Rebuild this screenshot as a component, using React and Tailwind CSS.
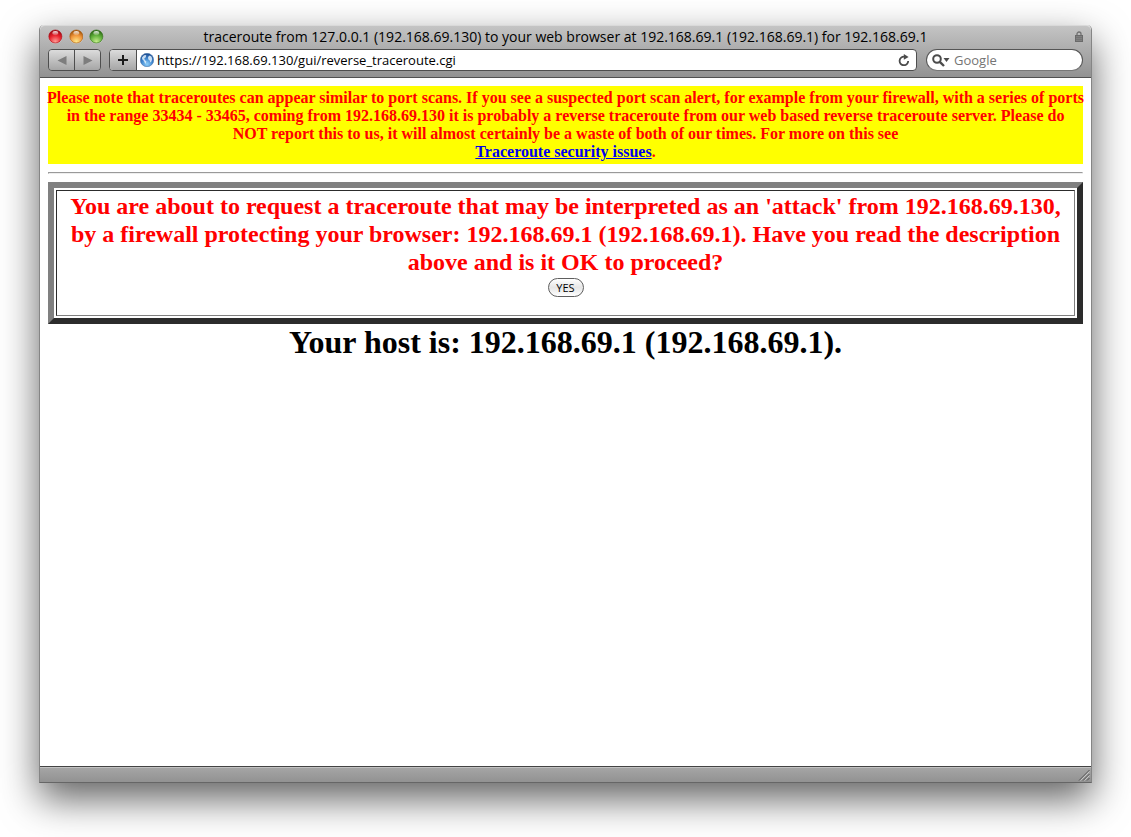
import React from "react";

const lights = [
  { name: "Close", id: "red", dark: "#a30a14", mid: "#e8222c", low: "#ff9a94" },
  { name: "Minimize", id: "amber", dark: "#a5570c", mid: "#f0953a", low: "#ffe98a" },
  { name: "Zoom", id: "green", dark: "#2f6b17", mid: "#5fae3a", low: "#c5ee8c" },
];

function Light({ name, id, dark, mid, low }) {
  return (
    <button aria-label={name} className="size-[15px]">
      <svg viewBox="0 0 15 15" className="block size-full">
        <defs>
          <radialGradient id={id} cx="50%" cy="88%" r="80%">
            <stop offset="0" stopColor={low} />
            <stop offset="0.6" stopColor={mid} />
            <stop offset="1" stopColor={dark} />
          </radialGradient>
          <linearGradient id={id + "-shine"} x1="0" y1="0" x2="0" y2="1">
            <stop offset="0" stopColor="#fff" stopOpacity="0.9" />
            <stop offset="1" stopColor="#fff" stopOpacity="0.15" />
          </linearGradient>
        </defs>
        <circle cx="7.5" cy="8" r="7" fill="#d8d8d8" />
        <circle cx="7.5" cy="7.5" r="6.7" fill={`url(#${id})`} stroke={dark} strokeWidth="0.6" />
        <ellipse cx="7.5" cy="4" rx="3" ry="2.2" fill={`url(#${id}-shine)`} />
      </svg>
    </button>
  );
}

function Globe() {
  return (
    <svg viewBox="0 0 14 14" className="size-[14px] shrink-0">
      <defs>
        <radialGradient id="globe" cx="50%" cy="80%" r="75%">
          <stop offset="0" stopColor="#8fd0fb" />
          <stop offset="0.55" stopColor="#3f86cf" />
          <stop offset="1" stopColor="#1d4d93" />
        </radialGradient>
      </defs>
      <circle cx="7" cy="7" r="6.7" fill="url(#globe)" stroke="#4b78ad" strokeWidth="0.6" />
      <path d="M2 4.4 4 2.2 6.2 2 6 3.6 5.4 4.8 4.2 5.6 5 7.2 6.4 8.6 5.6 11 4.6 9.6 3.6 7.4 2.2 6.2Z" fill="#e3f1fb" opacity="0.85" />
      <path d="M8.4 3.4 9.8 2.4 11.6 3.8 12.2 6 11.4 8.6 10.2 9.6 9.8 7.6 8.6 6.8 8 5Z" fill="#e3f1fb" opacity="0.85" />
    </svg>
  );
}

const toolButton =
  "flex items-center justify-center border-[#4e4e4e] bg-linear-to-b from-[#dcdcdc] to-[#a6a6a6]";

export default function App() {
  return (
    <div className="flex min-h-screen flex-col bg-white px-[39px] pt-[25px] pb-[54px] font-['Liberation_Serif',serif] text-black">
      <div className="flex flex-1 flex-col rounded-t-[5px] border-x border-b border-x-[#858585] border-b-[#666] bg-white shadow-[0_16px_38px_rgba(0,0,0,0.62)]">
        <header className="rounded-t-[5px] border-t border-b border-t-[#d9d9d9] border-b-[#515151] bg-linear-to-b from-[#c4c4c4] to-[#929292] px-2 font-['Open_Sans','Noto_Sans',sans-serif]">
          <div className="flex h-[21px] items-center">
            <div className="flex w-14 shrink-0 gap-1.5">
              {lights.map((l) => (
                <Light key={l.id} {...l} />
              ))}
            </div>
            <h1 className="min-w-0 flex-1 text-center text-[14px] leading-[18px] whitespace-nowrap">
              traceroute from 127.0.0.1 (192.168.69.130) to your web browser at 192.168.69.1 (192.168.69.1) for 192.168.69.1
            </h1>
            <div className="flex w-14 shrink-0 justify-end">
              <svg viewBox="0 0 8 11" className="h-[11px] w-2">
                <path d="M2 5V3a2 2 0 0 1 4 0v2" fill="none" stroke="#717171" strokeWidth="1.3" />
                <rect x="0.5" y="4.5" width="7" height="6" fill="#808080" stroke="#6a6a6a" />
                <path d="M1 6.5h6M1 8.5h6" stroke="#6f6f6f" strokeWidth="0.7" />
              </svg>
            </div>
          </div>
          <div className="flex h-[30px] items-start pt-0.5">
            <div className="flex h-[22px] w-[53px] shrink-0 overflow-hidden rounded-[4px] border border-[#4e4e4e]">
              <button aria-label="Back" className={toolButton + " w-[26px] border-r"}>
                <svg viewBox="0 0 10 9" className="h-[9px] w-[10px]">
                  <path d="M9.5 0v9L0.5 4.5Z" fill="#7d7d7d" />
                </svg>
              </button>
              <button aria-label="Forward" className={toolButton + " flex-1"}>
                <svg viewBox="0 0 10 9" className="h-[9px] w-[10px]">
                  <path d="M0.5 0v9L9.5 4.5Z" fill="#7d7d7d" />
                </svg>
              </button>
            </div>
            <div className="ml-2 flex h-[22px] min-w-0 flex-1 overflow-hidden rounded-[4px] border border-[#4e4e4e] bg-white">
              <button aria-label="Add bookmark" className={toolButton + " w-[27px] shrink-0 border-r"}>
                <svg viewBox="0 0 10 10" className="size-[10px]">
                  <path d="M5 0v10M0 5h10" stroke="#1c1c1c" strokeWidth="2" />
                </svg>
              </button>
              <div className="flex min-w-0 flex-1 items-center pr-1.5 pl-[3px]">
                <Globe />
                <input
                  aria-label="Address"
                  type="text"
                  defaultValue="https://192.168.69.130/gui/reverse_traceroute.cgi"
                  className="ml-[3px] min-w-0 flex-1 text-[13px] leading-[18px] outline-none"
                />
                <button aria-label="Reload" className="shrink-0">
                  <svg viewBox="0 0 12 12" className="size-3">
                    <path d="M10.2 7A4.3 4.3 0 1 1 6.4 2.7" fill="none" stroke="#4b4b4b" strokeWidth="1.8" />
                    <path d="M5.8 0 10.6 2.9 5.8 5.8Z" fill="#4b4b4b" />
                  </svg>
                </button>
              </div>
            </div>
            <div className="ml-[9px] flex h-[22px] w-[157px] shrink-0 items-center rounded-full border border-[#555] border-b-[#777] bg-white pl-[5px]">
              <svg viewBox="0 0 18 13" className="h-[13px] w-[18px] shrink-0">
                <circle cx="5" cy="5" r="3.8" fill="none" stroke="#4b4b4b" strokeWidth="2" />
                <path d="M7.8 7.8 12 12" stroke="#4b4b4b" strokeWidth="2.4" />
                <path d="M11.5 4h6l-3 4Z" fill="#4b4b4b" />
              </svg>
              <input
                aria-label="Google search"
                type="text"
                placeholder="Google"
                className="ml-1 w-0 min-w-0 flex-1 text-[13px] leading-[18px] outline-none placeholder:text-[#757575]"
              />
            </div>
          </div>
        </header>

        <main className="flex-1 px-2 pt-2">
          <div className="bg-[#ff0] py-[3px]">
            <p className="-mx-1 text-center text-[16px] leading-[18px] font-bold text-[#f00]">
              Please note that traceroutes can appear similar to port scans. If you see a suspected port scan alert, for
              example from your firewall, with a series of ports
              <br />
              in the range 33434 - 33465, coming from 192.168.69.130 it is probably a reverse traceroute from our web
              based reverse traceroute server. Please do
              <br />
              NOT report this to us, it will almost certainly be a waste of both of our times. For more on this see
              <br />
              <a href="#security" className="text-[#00e] underline">
                Traceroute security issues
              </a>
              .
            </p>
          </div>
          <hr className="my-2 h-0.5 border border-t-[#9a9a9a] border-r-[#eee] border-b-[#eee] border-l-[#9a9a9a]" />
          <section className="border-6 border-t-[#808080] border-r-[#2c2c2c] border-b-[#2c2c2c] border-l-[#808080] p-0.5">
            <div className="border border-t-[#2c2c2c] border-r-[#808080] border-b-[#808080] border-l-[#2c2c2c] px-px pt-px pb-[18px] text-center">
              <h2 className="text-[24px] leading-[28px] font-bold text-[#f00]">
                You are about to request a traceroute that may be interpreted as an 'attack' from 192.168.69.130, by a
                firewall protecting your browser: 192.168.69.1 (192.168.69.1). Have you read the description above and is
                it OK to proceed?
              </h2>
              <button className="mx-auto mt-0.5 block h-[19px] w-[36px] rounded-full border border-[#5e5e5e] bg-linear-to-b from-white via-[#e6e6e6] to-white font-['Open_Sans',sans-serif] text-[11px] leading-[16px] font-medium">
                YES
              </button>
            </div>
          </section>
          <h2 className="text-center text-[32px] leading-[36px] font-bold">
            Your host is: 192.168.69.1 (192.168.69.1).
          </h2>
        </main>

        <footer className="flex h-4 items-end justify-end border-t border-[#434343] bg-linear-to-b from-[#a6a6a6] to-[#929292] pr-px pb-px shadow-[inset_0_1px_0_#c2c2c2]">
          <svg viewBox="0 0 12 12" className="size-3">
            <path d="M1 11.5 11.5 1M5 11.5 11.5 5M9 11.5 11.5 9" stroke="#555" strokeWidth="1" />
            <path d="M2.5 11.5 11.5 2.5M6.5 11.5 11.5 6.5" stroke="#d0d0d0" strokeWidth="0.8" />
          </svg>
        </footer>
      </div>
    </div>
  );
}
